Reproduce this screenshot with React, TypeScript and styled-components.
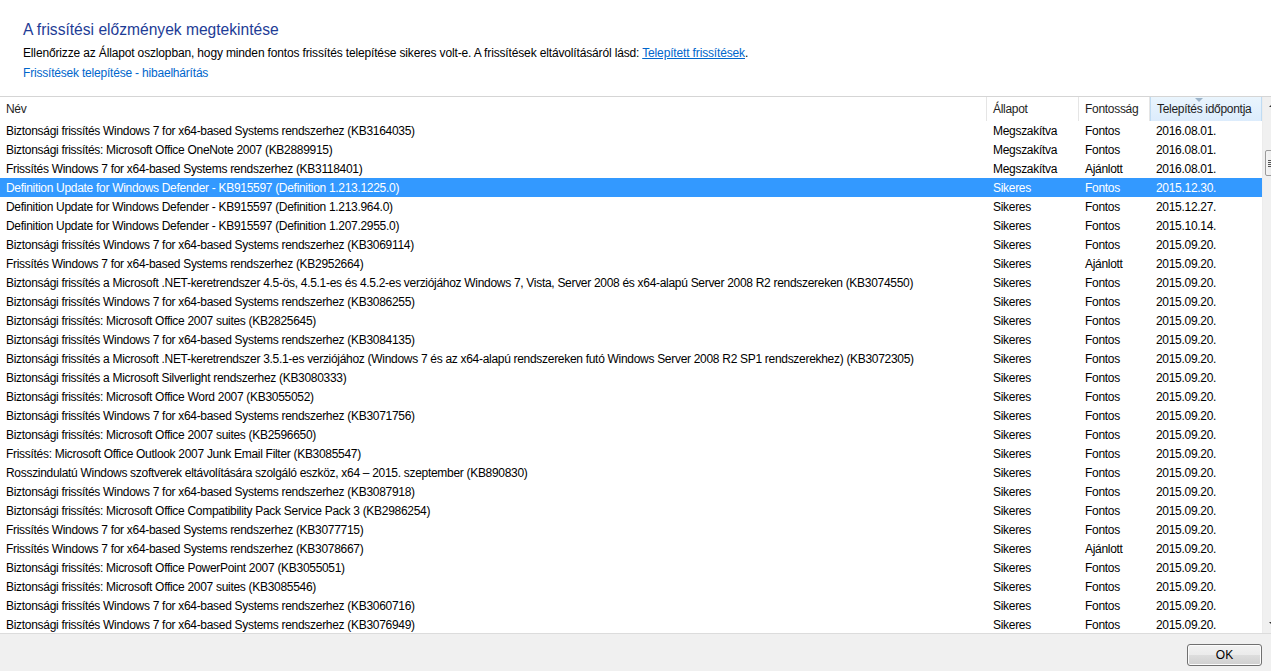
import styled, { createGlobalStyle } from 'styled-components'

const GlobalStyle = createGlobalStyle`
    html, body {
        margin: 0;
        padding: 0;
        background: #ffffff;
        overflow: hidden;
    }
    body {
        font-family: "Segoe UI", "Liberation Sans", Arial, sans-serif;
        font-size: 12px;
        color: #000000;
    }
`

const Page = styled.div`
    display: flex;
    flex-direction: column;
    width: 1271px;
    height: 671px;
`
const Intro = styled.div`
    flex-shrink: 0;
    display: flex;
    flex-direction: column;
    padding: 20px 0 0 23px;
    height: 96px;
    box-sizing: border-box;
`
const Title = styled.h1`
    margin: 0;
    font-size: 15.6px;
    font-weight: normal;
    line-height: 20px;
    color: #1e3c96;
`
const Text = styled.p`
    margin: 5px 0 0 0;
    line-height: 16px;
    letter-spacing: -0.15px;
    color: #000000;
`
const Link = styled.a<{$underline?: boolean}>`
    color: #0066cc;
    text-decoration: ${(props) => props.$underline ? 'underline' : 'none'};
    cursor: pointer;
`
const HelpLink = styled(Link)`
    display: block;
    margin-top: 4px;
    line-height: 16px;
    letter-spacing: -0.2px;
`
const ListArea = styled.div`
    flex-shrink: 0;
    display: flex;
    height: 536px;
    border-top: 1px solid #d5d5d5;
    border-bottom: 1px solid #dcdcdc;
    overflow: hidden;
`
const Table = styled.div`
    width: 1262px;
    letter-spacing: -0.3px;
`
const Cols = '987px 92px 71px 112px'
const HeaderRow = styled.div`
    display: grid;
    grid-template-columns: ${Cols};
    height: 24px;
`
const HeaderCell = styled.div<{$sorted?: boolean}>`
    position: relative;
    display: flex;
    align-items: center;
    padding-left: 6px;
    border-right: 1px solid ${(props) => props.$sorted ? '#c0dcf3' : '#e5e5e5'};
    border-left: ${(props) => props.$sorted ? '1px solid #c0dcf3' : 'none'};
    background: ${(props) => props.$sorted ? 'linear-gradient(#eaf5fd, #dcecfc)' : '#ffffff'};
    color: #1e1e1e;
    white-space: nowrap;
    overflow: hidden;
`
const SortArrow = styled.span`
    position: absolute;
    top: 1px;
    left: 44px;
    width: 0;
    height: 0;
    border-left: 4px solid transparent;
    border-right: 4px solid transparent;
    border-top: 4px solid #9bb3c9;
`
const Body = styled.div`
    display: flex;
    flex-direction: column;
`
const Row = styled.div<{$selected?: boolean}>`
    flex-shrink: 0;
    display: grid;
    grid-template-columns: ${Cols};
    height: 19px;
    align-items: center;
    background: ${(props) => props.$selected ? '#3399ff' : 'transparent'};
    color: ${(props) => props.$selected ? '#ffffff' : '#000000'};
`
const Cell = styled.div`
    padding-left: 6px;
    white-space: nowrap;
    overflow: hidden;
`
const Scrollbar = styled.div`
    width: 9px;
    overflow: hidden;
    background: #f0f0f0;
    border-left: 1px solid #ececec;
`
const ScrollInner = styled.div`
    width: 17px;
    height: 100%;
    display: flex;
    flex-direction: column;
    align-items: center;
`
const ArrowUp = styled.span`
    margin-top: 7px;
    width: 0;
    height: 0;
    border-left: 3px solid transparent;
    border-right: 3px solid transparent;
    border-bottom: 3px solid #333333;
`
const Thumb = styled.div`
    margin-top: 43px;
    margin-left: 2px;
    width: 15px;
    height: 26px;
    box-sizing: border-box;
    border: 1px solid #9b9b9b;
    border-radius: 2px;
    background: linear-gradient(90deg, #f4f4f4, #e4e4e4);
    display: flex;
    flex-direction: column;
    justify-content: center;
    gap: 1px;
    padding-left: 2px;
`
const Grip = styled.span`
    width: 5px;
    height: 1px;
    background: #555555;
`
const ArrowDown = styled.span`
    margin-top: auto;
    margin-bottom: 8px;
    width: 0;
    height: 0;
    border-left: 3px solid transparent;
    border-right: 3px solid transparent;
    border-top: 3px solid #333333;
`
const Footer = styled.div`
    flex: 1;
    background: #f0f0f0;
    display: flex;
    justify-content: flex-end;
    align-items: flex-start;
    padding: 10px 9px 0 0;
`
const Button = styled.button`
    width: 75px;
    height: 22px;
    font-family: "Segoe UI", "Liberation Sans", Arial, sans-serif;
    font-size: 12px;
    color: #000000;
    border: 1px solid #707070;
    border-radius: 3px;
    background: linear-gradient(#f2f2f2 0%, #ebebeb 50%, #dddddd 51%, #cfcfcf 100%);
    box-shadow: inset 0 0 0 1px #fcfcfc;
`

type Update = [string, string, string, string]

const updates: Update[] = [
    ['Biztonsági frissítés Windows 7 for x64-based Systems rendszerhez (KB3164035)', 'Megszakítva', 'Fontos', '2016.08.01.'],
    ['Biztonsági frissítés: Microsoft Office OneNote 2007 (KB2889915)', 'Megszakítva', 'Fontos', '2016.08.01.'],
    ['Frissítés Windows 7 for x64-based Systems rendszerhez (KB3118401)', 'Megszakítva', 'Ajánlott', '2016.08.01.'],
    ['Definition Update for Windows Defender - KB915597 (Definition 1.213.1225.0)', 'Sikeres', 'Fontos', '2015.12.30.'],
    ['Definition Update for Windows Defender - KB915597 (Definition 1.213.964.0)', 'Sikeres', 'Fontos', '2015.12.27.'],
    ['Definition Update for Windows Defender - KB915597 (Definition 1.207.2955.0)', 'Sikeres', 'Fontos', '2015.10.14.'],
    ['Biztonsági frissítés Windows 7 for x64-based Systems rendszerhez (KB3069114)', 'Sikeres', 'Fontos', '2015.09.20.'],
    ['Frissítés Windows 7 for x64-based Systems rendszerhez (KB2952664)', 'Sikeres', 'Ajánlott', '2015.09.20.'],
    ['Biztonsági frissítés a Microsoft .NET-keretrendszer 4.5-ös, 4.5.1-es és 4.5.2-es verziójához Windows 7, Vista, Server 2008 és x64-alapú Server 2008 R2 rendszereken (KB3074550)', 'Sikeres', 'Fontos', '2015.09.20.'],
    ['Biztonsági frissítés Windows 7 for x64-based Systems rendszerhez (KB3086255)', 'Sikeres', 'Fontos', '2015.09.20.'],
    ['Biztonsági frissítés: Microsoft Office 2007 suites (KB2825645)', 'Sikeres', 'Fontos', '2015.09.20.'],
    ['Biztonsági frissítés Windows 7 for x64-based Systems rendszerhez (KB3084135)', 'Sikeres', 'Fontos', '2015.09.20.'],
    ['Biztonsági frissítés a Microsoft .NET-keretrendszer 3.5.1-es verziójához (Windows 7 és az x64-alapú rendszereken futó Windows Server 2008 R2 SP1 rendszerekhez) (KB3072305)', 'Sikeres', 'Fontos', '2015.09.20.'],
    ['Biztonsági frissítés a Microsoft Silverlight rendszerhez (KB3080333)', 'Sikeres', 'Fontos', '2015.09.20.'],
    ['Biztonsági frissítés: Microsoft Office Word 2007 (KB3055052)', 'Sikeres', 'Fontos', '2015.09.20.'],
    ['Biztonsági frissítés Windows 7 for x64-based Systems rendszerhez (KB3071756)', 'Sikeres', 'Fontos', '2015.09.20.'],
    ['Biztonsági frissítés: Microsoft Office 2007 suites (KB2596650)', 'Sikeres', 'Fontos', '2015.09.20.'],
    ['Frissítés: Microsoft Office Outlook 2007 Junk Email Filter (KB3085547)', 'Sikeres', 'Fontos', '2015.09.20.'],
    ['Rosszindulatú Windows szoftverek eltávolítására szolgáló eszköz, x64 – 2015. szeptember (KB890830)', 'Sikeres', 'Fontos', '2015.09.20.'],
    ['Biztonsági frissítés Windows 7 for x64-based Systems rendszerhez (KB3087918)', 'Sikeres', 'Fontos', '2015.09.20.'],
    ['Biztonsági frissítés: Microsoft Office Compatibility Pack Service Pack 3 (KB2986254)', 'Sikeres', 'Fontos', '2015.09.20.'],
    ['Frissítés Windows 7 for x64-based Systems rendszerhez (KB3077715)', 'Sikeres', 'Fontos', '2015.09.20.'],
    ['Frissítés Windows 7 for x64-based Systems rendszerhez (KB3078667)', 'Sikeres', 'Ajánlott', '2015.09.20.'],
    ['Biztonsági frissítés: Microsoft Office PowerPoint 2007 (KB3055051)', 'Sikeres', 'Fontos', '2015.09.20.'],
    ['Biztonsági frissítés: Microsoft Office 2007 suites (KB3085546)', 'Sikeres', 'Fontos', '2015.09.20.'],
    ['Biztonsági frissítés Windows 7 for x64-based Systems rendszerhez (KB3060716)', 'Sikeres', 'Fontos', '2015.09.20.'],
    ['Biztonsági frissítés Windows 7 for x64-based Systems rendszerhez (KB3076949)', 'Sikeres', 'Fontos', '2015.09.20.'],
]

const App = () => {
    const selected = 3
    return (
        <>
        <GlobalStyle />
        <Page>
            <Intro>
                <Title>A frissítési előzmények megtekintése</Title>
                <Text>
                    Ellenőrizze az Állapot oszlopban, hogy minden fontos frissítés telepítése sikeres volt-e. A frissítések eltávolításáról lásd: <Link $underline>Telepített frissítések</Link>.
                </Text>
                <HelpLink>Frissítések telepítése - hibaelhárítás</HelpLink>
            </Intro>
            <ListArea>
                <Table>
                    <HeaderRow>
                        <HeaderCell>Név</HeaderCell>
                        <HeaderCell>Állapot</HeaderCell>
                        <HeaderCell>Fontosság</HeaderCell>
                        <HeaderCell $sorted>Telepítés időpontja<SortArrow /></HeaderCell>
                    </HeaderRow>
                    <Body>
                        {updates.map((u, i) => (
                            <Row key={'upd' + i} $selected={i === selected}>
                                <Cell>{u[0]}</Cell>
                                <Cell>{u[1]}</Cell>
                                <Cell>{u[2]}</Cell>
                                <Cell>{u[3]}</Cell>
                            </Row>
                        ))}
                    </Body>
                </Table>
                <Scrollbar>
                    <ScrollInner>
                        <ArrowUp />
                        <Thumb>
                            <Grip /><Grip /><Grip /><Grip />
                        </Thumb>
                        <ArrowDown />
                    </ScrollInner>
                </Scrollbar>
            </ListArea>
            <Footer>
                <Button>OK</Button>
            </Footer>
        </Page>
        </>
    )
}

export default App
